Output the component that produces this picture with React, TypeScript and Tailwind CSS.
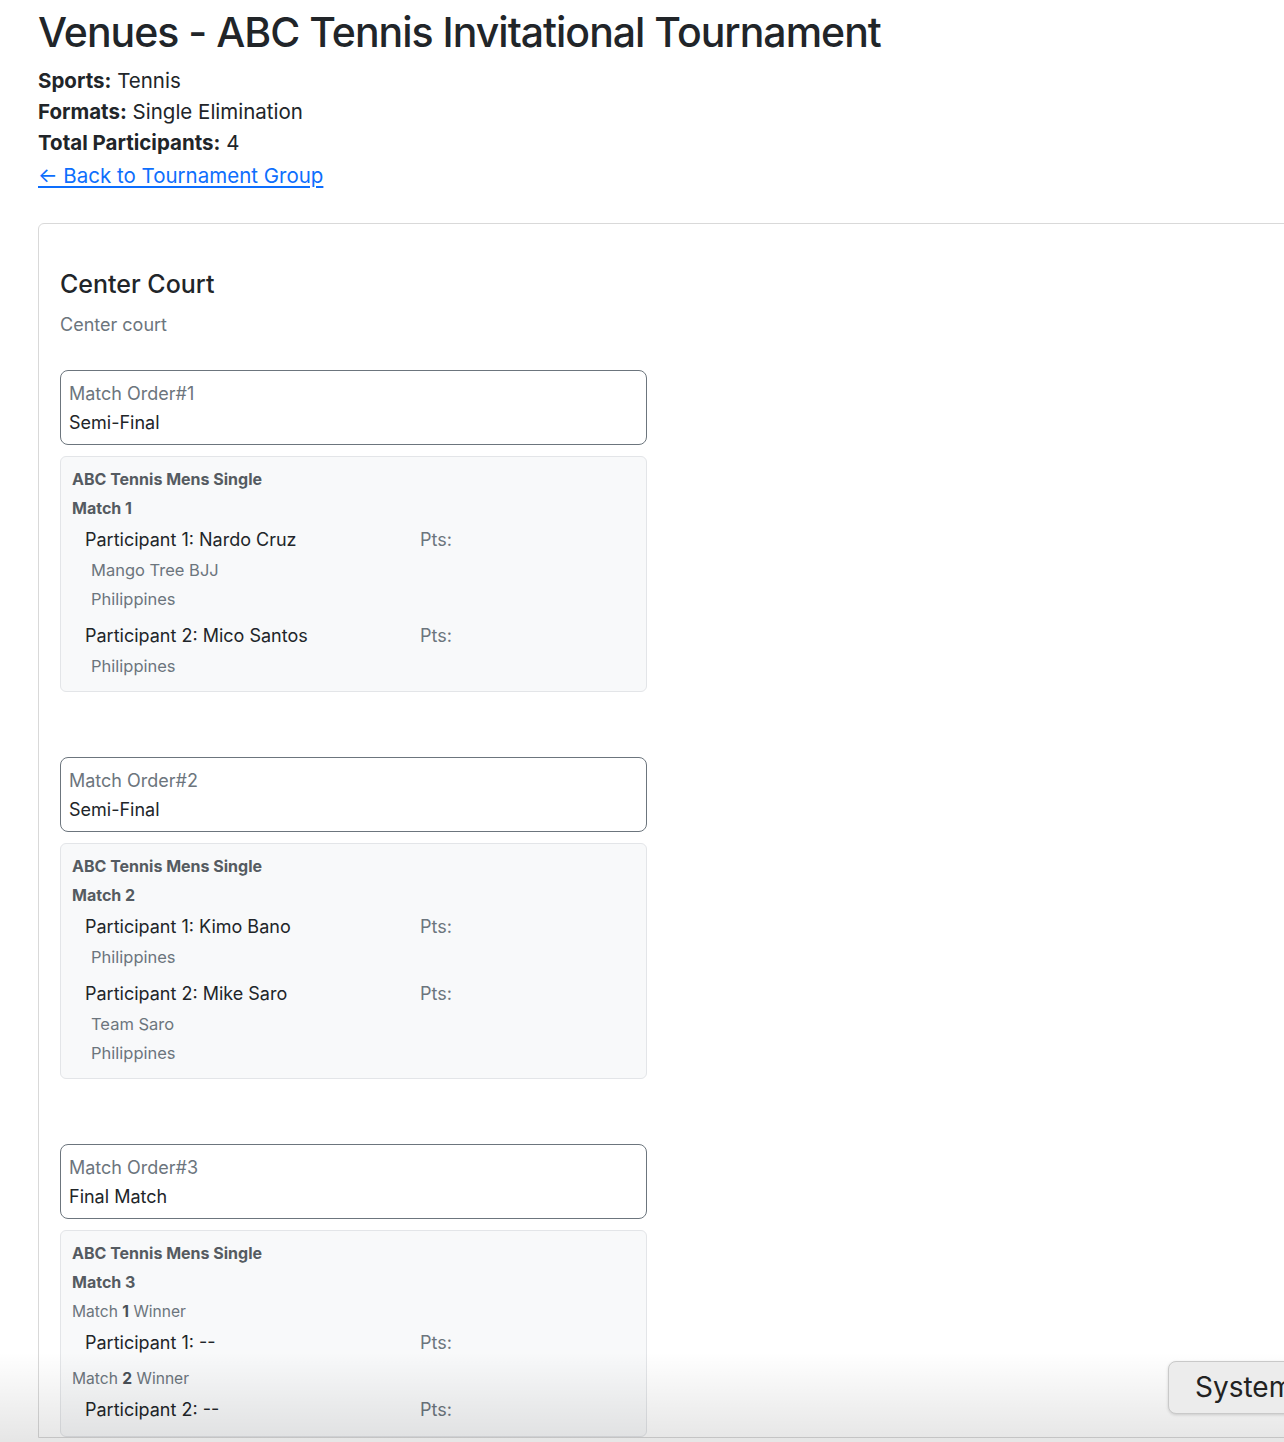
import React from "react";

type Participant = {
  label: string;
  details: string[];
  source?: React.ReactNode;
};

type Match = {
  order: number;
  round: string;
  event: string;
  match: string;
  participants: Participant[];
};

const matches: Match[] = [
  {
    order: 1,
    round: "Semi-Final",
    event: "ABC Tennis Mens Single",
    match: "Match 1",
    participants: [
      { label: "Participant 1: Nardo Cruz", details: ["Mango Tree BJJ", "Philippines"] },
      { label: "Participant 2: Mico Santos", details: ["Philippines"] },
    ],
  },
  {
    order: 2,
    round: "Semi-Final",
    event: "ABC Tennis Mens Single",
    match: "Match 2",
    participants: [
      { label: "Participant 1: Kimo Bano", details: ["Philippines"] },
      { label: "Participant 2: Mike Saro", details: ["Team Saro", "Philippines"] },
    ],
  },
  {
    order: 3,
    round: "Final Match",
    event: "ABC Tennis Mens Single",
    match: "Match 3",
    participants: [
      {
        label: "Participant 1: --",
        details: [],
        source: (
          <>
            Match <b className="font-bold text-[#495057]">1</b> Winner
          </>
        ),
      },
      {
        label: "Participant 2: --",
        details: [],
        source: (
          <>
            Match <b className="font-bold text-[#495057]">2</b> Winner
          </>
        ),
      },
    ],
  },
];

function MatchBlock({ m }: { m: Match }) {
  return (
    <div className="w-[587px] flex flex-col">
      <div className="border border-[#6c757d] rounded-[8px] px-[8px] pt-[7px] pb-[8px] flex flex-col">
        <div className="text-[18px] leading-[31px] text-[#6c757d]">Match Order#{m.order}</div>
        <div className="text-[18px] leading-[27px] text-[#212529]">{m.round}</div>
      </div>
      <div className="mt-[11px] bg-[#f8f9fa] border border-[#e3e5e8] rounded-[6px] px-[11px] pt-[8px] pb-[11px] flex flex-col">
        <div className="text-[16px] leading-[29px] font-bold text-[#555b61]">{m.event}</div>
        <div className="text-[16px] leading-[29px] font-bold text-[#555b61]">{m.match}</div>
        {m.participants.map((p, i) => (
          <div key={i} className="flex flex-col">
            {p.source && (
              <div className={`text-[15.6px] leading-[29px] text-[#6c757d] ${i > 0 ? "mt-[6px]" : ""}`}>
                {p.source}
              </div>
            )}
            <div className={`flex pl-[13px] ${p.source ? "mt-[1px]" : i > 0 ? "mt-[7px]" : "mt-[1px]"}`}>
              <div className="w-[335px] text-[18px] leading-[31px] text-[#212529]">{p.label}</div>
              <div className="text-[18px] leading-[31px] text-[#6c757d]">Pts:</div>
            </div>
            {p.details.map((d, j) => (
              <div key={j} className="pl-[19px] text-[16.5px] leading-[28px] text-[#6c757d] mt-[1px]">
                {d}
              </div>
            ))}
          </div>
        ))}
      </div>
    </div>
  );
}

export default function App() {
  return (
    <div
      className="relative h-[1442px] w-full overflow-hidden bg-white text-[#212529]"
      style={{ fontFamily: "Inter, 'Noto Sans', Arial, sans-serif" }}
    >
      <div className="pl-[38px] pt-[6px] flex flex-col">
        <h1 className="text-[41px] leading-[52px] font-medium tracking-[-1px] text-[#212529]">
          Venues - ABC Tennis Invitational Tournament
        </h1>
        <div className="mt-[7px] flex flex-col text-[20.5px] leading-[31px]">
          <div>
            <b className="font-bold">Sports:</b> Tennis
          </div>
          <div>
            <b className="font-bold">Formats:</b> Single Elimination
          </div>
          <div>
            <b className="font-bold">Total Participants:</b> 4
          </div>
          <a href="#" className="mt-[2px] text-[#0d6efd] underline underline-offset-[3px] w-fit">
            ← Back to Tournament Group
          </a>
        </div>

        <div className="mt-[32px] w-[1320px] border border-[#d9d9d9] rounded-tl-[6px] pl-[21px] pt-[42px] flex flex-col">
          <h2 className="text-[25px] leading-[36px] font-medium text-[#212529]">Center Court</h2>
          <p className="mt-[9px] text-[18px] leading-[28px] text-[#6c757d]">Center court</p>
          <div className="mt-[31px] flex flex-col gap-[65px]">
            {matches.map((m) => (
              <MatchBlock key={m.order} m={m} />
            ))}
          </div>
        </div>
      </div>

      {/* soft fade along the bottom edge of the window */}
      <div className="absolute left-0 right-0 bottom-0 h-[90px] bg-linear-to-b from-black/0 to-black/10 pointer-events-none" />

      <button className="absolute left-[1168px] top-[1361px] h-[53px] pl-[26px] pr-[20px] bg-[#ececec] border border-[#c9c9c9] rounded-[8px] shadow-[0_1px_3px_rgba(0,0,0,0.15)] text-[28px] leading-[51px] text-[#222] whitespace-nowrap">
        System
      </button>
    </div>
  );
}
